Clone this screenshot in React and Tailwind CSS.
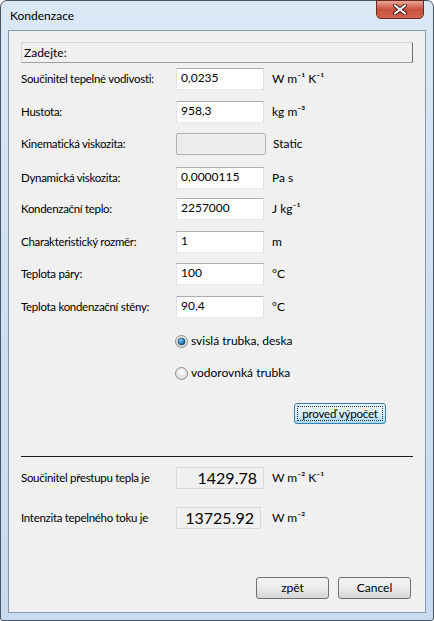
import React from "react";

const font = { fontFamily: 'Lato, "Noto Sans", sans-serif' };

function TextBox({ value }) {
  return (
    <div className="w-[88px] h-[22px] bg-white border border-[#abadb3] border-l-[#e2e3ea] border-r-[#dbdfe6] border-b-[#e3e9ef] pl-[4px] pt-[1px] text-[12px] leading-[16px] text-black">
      {value}
    </div>
  );
}

const rows = [
  { label: "Součinitel tepelné vodivosti:", value: "0,0235", unit: "W m⁻¹ K⁻¹", mt: "mt-[5px]" },
  { label: "Hustota:", value: "958,3", unit: "kg m⁻³", mt: "mt-[11px]" },
  { label: "Kinematická viskozita:", value: null, unit: "Static", mt: "mt-[10px]" },
  { label: "Dynamická viskozita:", value: "0,0000115", unit: "Pa s", mt: "mt-[12px]" },
  { label: "Kondenzační teplo:", value: "2257000", unit: "J kg⁻¹", mt: "mt-[9px]" },
  { label: "Charakteristický rozměr:", value: "1", unit: "m", mt: "mt-[11px]" },
  { label: "Teplota páry:", value: "100", unit: "°C", mt: "mt-[10px]" },
  { label: "Teplota kondenzační stěny:", value: "90,4", unit: "°C", mt: "mt-[11px]" },
];

function Radio({ checked }) {
  return (
    <svg width="13" height="13" viewBox="0 0 13 13">
      <defs>
        <radialGradient id={checked ? "rg1" : "rg0"} cx="50%" cy="40%" r="60%">
          <stop offset="0%" stopColor="#ffffff" />
          <stop offset="100%" stopColor="#d6d6d6" />
        </radialGradient>
        <radialGradient id="dot" cx="40%" cy="35%" r="70%">
          <stop offset="0%" stopColor="#8ad0f5" />
          <stop offset="60%" stopColor="#2a7ab0" />
          <stop offset="100%" stopColor="#0e3d66" />
        </radialGradient>
      </defs>
      <circle cx="6.5" cy="6.5" r="6" fill={`url(#${checked ? "rg1" : "rg0"})`} stroke="#8e8f8f" strokeWidth="1" />
      {checked && <circle cx="6.5" cy="6.5" r="3.6" fill="url(#dot)" stroke="#1c4f7a" strokeWidth="0.6" />}
    </svg>
  );
}

function WinButton({ children }) {
  return (
    <div className="w-[73px] h-[22px] rounded-[3px] border border-[#707070] bg-gradient-to-b from-[#f2f2f2] via-[#ebebeb] to-[#d5d5d5] flex items-center justify-center text-[12px] text-black">
      {children}
    </div>
  );
}

export default function App() {
  return (
    <div className="w-[434px] h-[621px] bg-white whitespace-nowrap" style={font}>
      <div className="w-[434px] h-[621px] rounded-t-[7px] rounded-b-[3px] border border-[#4a5562] bg-gradient-to-b from-[#dbe8f6] via-[#cddff2] to-[#c8dbf1] flex flex-col">
        <div className="h-[29px] flex items-start justify-between">
          <div className="pl-[9px] pt-[6px] text-[12px] text-black leading-[18px]">Kondenzace</div>
          <div className="mr-[9px] w-[48px] h-[19px] -mt-[1px] rounded-b-[5px] border border-[#6b2b24] bg-gradient-to-b from-[#e8a593] via-[#c9503c] to-[#d0624c] flex items-center justify-center">
            <svg width="14" height="11" viewBox="0 0 14 11">
              <path d="M2 1.5 L12 9.5 M12 1.5 L2 9.5" stroke="#3b1a16" strokeWidth="4" strokeLinecap="round" />
              <path d="M2 1.5 L12 9.5 M12 1.5 L2 9.5" stroke="#ffffff" strokeWidth="2.2" strokeLinecap="round" />
            </svg>
          </div>
        </div>
        <div className="mx-[7px] mb-[7px] flex-1 border border-[#8a99aa] bg-[#f0f0f0] pl-[12px] pr-[12px] pt-[11px] flex flex-col text-[12px] text-black">
          <div className="h-[21px] border border-[#d5d5d5] border-r-[#6d6d6d] border-b-[#a0a0a0] pl-[2px] flex items-center">
            Zadejte:
          </div>
          {rows.map((r) => (
            <div key={r.label} className={`${r.mt} h-[22px] flex items-center`}>
              <div className="w-[155px] text-[11.5px] tracking-[-0.3px]">{r.label}</div>
              {r.value === null ? (
                <div className="w-[90px] h-[22px] rounded-[2px] border border-[#adb2b5] bg-[#ececec]" />
              ) : (
                <TextBox value={r.value} />
              )}
              <div className={r.value === null ? "ml-[7px]" : "ml-[8px]"}>{r.unit}</div>
            </div>
          ))}
          <div className="mt-[15px] ml-[154px] flex items-center gap-[3px] h-[16px]">
            <Radio checked />
            <span>svislá trubka, deska</span>
          </div>
          <div className="mt-[16px] ml-[154px] flex items-center gap-[3px] h-[16px]">
            <Radio checked={false} />
            <span>vodorovnká trubka</span>
          </div>
          <div className="mt-[22px] flex justify-end pr-[27px]">
            <div className="w-[92px] h-[21px] rounded-[3px] border border-[#3c7fb1] bg-gradient-to-b from-[#eaf6fd] via-[#d9f0fc] to-[#a7d9f5] p-[2px]">
              <div className="w-full h-full border border-dotted border-[#333] flex items-center justify-center text-[11.5px] tracking-[-0.2px]">
                proveď výpočet
              </div>
            </div>
          </div>
          <div className="mt-[32px] h-[1px] bg-[#1a1a1a]" />
          <div className="mt-[10px] h-[22px] flex items-center">
            <div className="w-[155px] text-[11.5px] tracking-[-0.3px]">Součinitel přestupu tepla je</div>
            <div className="w-[88px] h-[22px] border border-[#d9d9d9] bg-[#f0f0f0] flex items-center justify-end pr-[6px] text-[16px] leading-[20px]">
              1429.78
            </div>
            <div className="ml-[8px]">W m⁻² K⁻¹</div>
          </div>
          <div className="mt-[18px] h-[22px] flex items-center">
            <div className="w-[155px] text-[11.5px] tracking-[-0.3px]">Intenzita tepelného toku je</div>
            <div className="w-[85px] h-[22px] border border-[#d9d9d9] bg-[#f0f0f0] flex items-center justify-end pr-[6px] text-[16px] leading-[20px]">
              13725.92
            </div>
            <div className="ml-[11px]">W m⁻²</div>
          </div>
          <div className="mt-[48px] flex justify-end gap-[9px] pr-[2px]">
            <WinButton>zpět</WinButton>
            <WinButton>Cancel</WinButton>
          </div>
        </div>
      </div>
    </div>
  );
}
